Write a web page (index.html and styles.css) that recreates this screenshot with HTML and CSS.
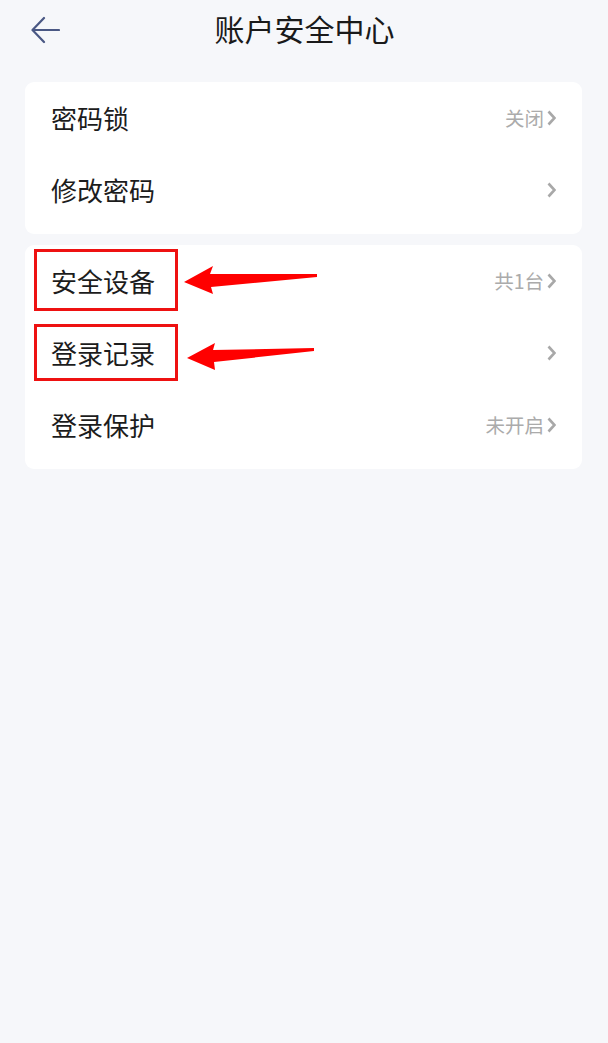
FILE: index.html
```html
<!DOCTYPE html>
<html lang="zh-CN">
<head>
<meta charset="utf-8">
<title>账户安全中心</title>
<link rel="stylesheet" href="styles.css">
</head>
<body>
<div class="page">
  <header class="topbar">
    <span class="back">
      <svg width="30" height="28" viewBox="0 0 30 28"><path d="M29 14H3M14 2L2.5 14L14 26" fill="none" stroke="#4a5884" stroke-width="2.2" stroke-linecap="round" stroke-linejoin="round"/></svg>
    </span>
    <h1 class="title">账户安全中心</h1>
  </header>

  <section class="card card-first">
    <div class="row"><span class="label">密码锁</span><span class="value">关闭<svg class="chev" width="9" height="16" viewBox="0 0 9 16"><polyline points="1.5,1.5 7.5,8 1.5,14.5" fill="none" stroke="#a8a8a8" stroke-width="2.6"/></svg></span></div>
    <div class="row"><span class="label">修改密码</span><span class="value"><svg class="chev" width="9" height="16" viewBox="0 0 9 16"><polyline points="1.5,1.5 7.5,8 1.5,14.5" fill="none" stroke="#a8a8a8" stroke-width="2.6"/></svg></span></div>
  </section>

  <section class="card card-second">
    <div class="row"><span class="label">安全设备</span><span class="value">共1台<svg class="chev" width="9" height="16" viewBox="0 0 9 16"><polyline points="1.5,1.5 7.5,8 1.5,14.5" fill="none" stroke="#a8a8a8" stroke-width="2.6"/></svg></span></div>
    <div class="row"><span class="label">登录记录</span><span class="value"><svg class="chev" width="9" height="16" viewBox="0 0 9 16"><polyline points="1.5,1.5 7.5,8 1.5,14.5" fill="none" stroke="#a8a8a8" stroke-width="2.6"/></svg></span></div>
    <div class="row"><span class="label">登录保护</span><span class="value">未开启<svg class="chev" width="9" height="16" viewBox="0 0 9 16"><polyline points="1.5,1.5 7.5,8 1.5,14.5" fill="none" stroke="#a8a8a8" stroke-width="2.6"/></svg></span></div>

    <div class="mark mark-one"></div>
    <div class="mark mark-two"></div>
    <svg class="arrows" width="300" height="130" viewBox="0 0 300 130">
      <polygon fill="#ff0000" points="159,37 188,21 185,29 292,29 292,32 186,42 188,49"/>
      <polygon fill="#ff0000" points="162,113 190,98 188,105 289,103 289,106 189,117 190,125"/>
    </svg>
  </section>
</div>
</body>
</html>
```
FILE: styles.css
```css
* { box-sizing: border-box; }
html, body { margin: 0; padding: 0; }
body {
  background: #f6f7fa;
  font-family: "Noto Sans CJK SC", "Noto Sans", sans-serif;
  color: #1c1c1c;
}
.page {
  padding: 0 26px 0 25px;
}
.topbar {
  height: 60px;
  position: relative;
  display: flex;
  align-items: center;
  justify-content: center;
}
.back {
  position: absolute;
  left: 5px;
  top: 16px;
  display: flex;
}
.title {
  margin: 0 0 4px;
  font-size: 30px;
  font-weight: 400;
  color: #1a1a1a;
  line-height: 1;
  transform: translateX(1px);
}
.card {
  background: #ffffff;
  border-radius: 9px;
  padding: 0 26px 8px 26px;
  position: relative;
}
.card-first { margin-top: 22px; }
.card-second { margin-top: 11px; }
.row {
  height: 72px;
  display: flex;
  align-items: center;
  justify-content: space-between;
}
.label {
  font-size: 26px;
  line-height: 1;
  color: #1c1c1c;
}
.value {
  display: flex;
  align-items: center;
  font-size: 19.5px;
  line-height: 1;
  color: #ababab;
}
.chev {
  display: block;
  margin-left: 3px;
}
.mark {
  position: absolute;
  border: 3px solid #ee1111;
  left: 9px;
  width: 144px;
}
.mark-one { top: 4px; height: 62px; }
.mark-two { top: 79px; height: 57px; }
.arrows {
  position: absolute;
  left: 0;
  top: 0;
}
```
